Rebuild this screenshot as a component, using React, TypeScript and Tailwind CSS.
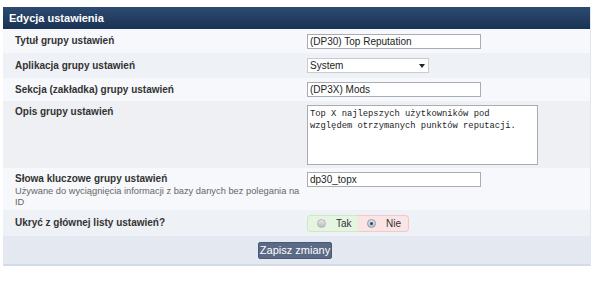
import React from "react";

const sans = { fontFamily: '"Liberation Sans", Arial, sans-serif' };

function Row({
  bg,
  label,
  desc,
  children,
  className = "",
  top = false,
}: {
  bg: string;
  label: string;
  desc?: React.ReactNode;
  children: React.ReactNode;
  className?: string;
  top?: boolean;
}) {
  return (
    <div className={`grid grid-cols-[300px_1fr] ${bg} ${className}`}>
      <div className={`pl-[12px] pr-[2px] flex flex-col ${top ? "justify-start pt-[5px]" : "justify-center"}`}>
        <div className="text-[10px] leading-[12px] font-bold text-[#333]">{label}</div>
        {desc && <div className="text-[9.3px] leading-[11px] text-[#666] mt-[1px]">{desc}</div>}
      </div>
      <div className={`pl-[4px] flex ${top ? "items-start pt-[4px]" : "items-center"}`}>{children}</div>
    </div>
  );
}

function TextInput({ value }: { value: string }) {
  return (
    <div className="w-[174px] h-[15px] bg-white border border-[#a9acb3] text-[10px] leading-[13px] text-[#222] pl-[2px]">
      {value}
    </div>
  );
}

export default function App() {
  return (
    <div className="w-[600px] h-[285px] bg-white pt-[7px]" style={sans}>
      <div className="ml-[3px] w-[588px] border-r border-[#e2e6ec]">
        <div className="h-[22px] bg-gradient-to-b from-[#2d4a70] to-[#1a3354] text-white text-[11px] font-bold flex items-center pl-[6px]">
          Edycja ustawienia
        </div>
        <Row bg="bg-[#f7f8fb]" label="Tytuł grupy ustawień" className="h-[24px]">
          <TextInput value="(DP30) Top Reputation" />
        </Row>
        <Row bg="bg-[#eef1f5]" label="Aplikacja grupy ustawień" className="h-[25px]">
          <div className="w-[122px] h-[15px] bg-white border border-[#c8cbd0] text-[10px] leading-[13px] text-[#222] pl-[2px] flex items-center justify-between pr-[3px]">
            <span>System</span>
            <svg width="6" height="4" viewBox="0 0 6 4">
              <path d="M0 0 L6 0 L3 4 Z" fill="#222" />
            </svg>
          </div>
        </Row>
        <Row bg="bg-[#f7f8fb]" label="Sekcja (zakładka) grupy ustawień" className="h-[23px]">
          <TextInput value="(DP3X) Mods" />
        </Row>
        <Row bg="bg-[#eef0f4]" label="Opis grupy ustawień" className="h-[67px]" top>
          <div
            className="w-[231px] h-[60px] bg-white border border-[#a9acb3] text-[8.8px] leading-[12px] text-[#222] pl-[2px] pt-[2px] whitespace-pre"
            style={{ fontFamily: '"Liberation Mono", "Courier New", monospace' }}
          >
            {"Top X najlepszych użytkowników pod\nwzględem otrzymanych punktów reputacji."}
          </div>
        </Row>
        <Row
          bg="bg-[#f7f8fb]"
          label="Słowa kluczowe grupy ustawień"
          desc="Używane do wyciągnięcia informacji z bazy danych bez polegania na ID"
          className="h-[42px]"
          top
        >
          <TextInput value="dp30_topx" />
        </Row>
        <Row bg="bg-[#eef1f5]" label="Ukryć z głównej listy ustawień?" className="h-[26px]">
          <div className="flex h-[17px] text-[10px] text-[#333]">
            <label className="flex items-center w-[51px] bg-[#e5f5e1] border border-[#cfe8c9] rounded-l-[4px] border-r-0 pl-[9px] gap-[10px]">
              <span className="w-[9px] h-[9px] rounded-full bg-gradient-to-b from-[#e8e8e8] to-[#bdbdbd] border border-[#b5b5b5]" />
              <span>Tak</span>
            </label>
            <label className="flex items-center w-[51px] bg-[#fbe4e4] border border-[#efcaca] rounded-r-[4px] border-l-0 pl-[9px] gap-[10px]">
              <span className="w-[9px] h-[9px] rounded-full bg-gradient-to-b from-[#dfe6ee] to-[#b7c2cf] border border-[#8e9cad] flex items-center justify-center">
                <span className="w-[3px] h-[3px] rounded-full bg-[#2a4566]" />
              </span>
              <span>Nie</span>
            </label>
          </div>
        </Row>
        <div className="h-[30px] bg-[#e4e9f1] border-b-[2px] border-[#d3dbe6] flex items-center justify-center">
          <button className="h-[17px] px-[1px] bg-[#5b6a86] border border-[#4b5a75] rounded-[2px] text-white text-[11px] leading-[15px] mr-[3px]">
            Zapisz zmiany
          </button>
        </div>
      </div>
    </div>
  );
}
